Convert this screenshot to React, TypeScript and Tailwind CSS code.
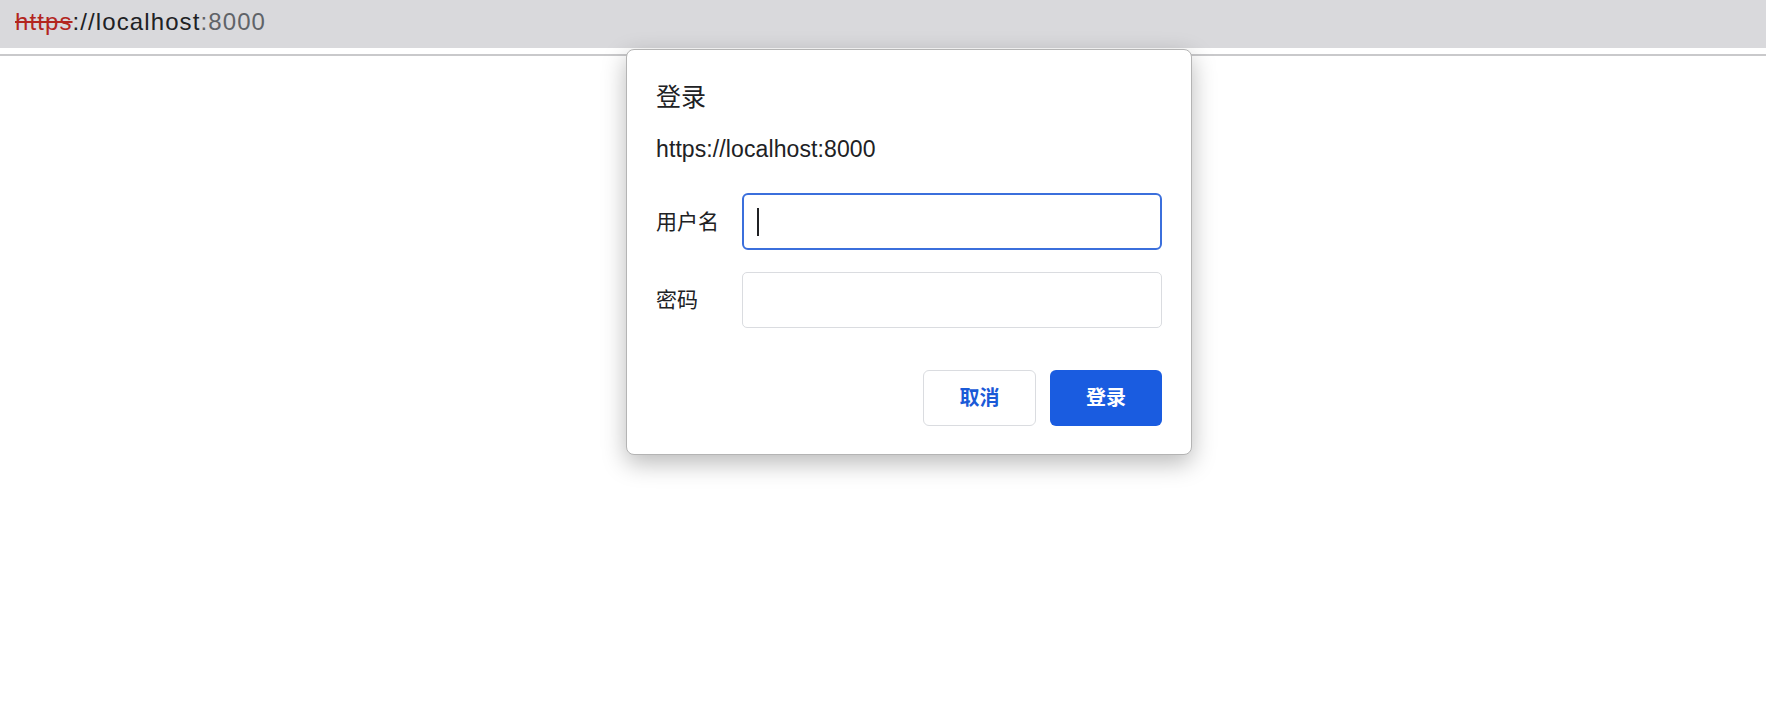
export default function App() {
  return (
    <div className="relative w-[1766px] h-[702px] bg-white overflow-hidden font-['Liberation_Sans','Noto_Sans_CJK_SC',sans-serif] text-[#202124]">
      <div className="h-[48px] bg-[#d9d9dc] pl-[15px] pt-[8px]">
        <div className="text-[24px] leading-[28px] tracking-[1.1px] whitespace-nowrap">
          <span className="text-[#b3261e] line-through decoration-[#b3261e]">https</span>
          <span className="text-[#202124]">://localhost</span>
          <span className="text-[#5f6368]">:8000</span>
        </div>
      </div>
      <div className="h-[6px] bg-white" />
      <div className="h-[2px] bg-[#c9c9cb]" />

      <div className="absolute left-[626px] top-[49px] w-[566px] rounded-[8px] border border-[#b4b4b4] bg-white px-[29px] pt-[31px] pb-[28px] shadow-[0_8px_24px_rgba(0,0,0,0.28)]">
        <div className="h-[32px] text-[25px] leading-[32px]">登录</div>
        <div className="mt-[22px] text-[23px] leading-[28px] tracking-[0.1px]">https://localhost:8000</div>

        <div className="mt-[30px] flex items-center">
          <div className="w-[86px] text-[21px] leading-[28px]">用户名</div>
          <div className="flex h-[57px] flex-1 items-center rounded-[6px] border-2 border-[#3b6fdc] pl-[13px]">
            <div className="h-[28px] w-[2px] bg-[#202124]" />
          </div>
        </div>

        <div className="mt-[22px] flex items-center">
          <div className="w-[86px] text-[21px] leading-[28px]">密码</div>
          <div className="h-[56px] flex-1 rounded-[5px] border border-[#dadce0]" />
        </div>

        <div className="mt-[42px] flex justify-end gap-[14px]">
          <div className="flex h-[56px] w-[113px] items-center justify-center rounded-[6px] border border-[#dadce0] text-[20px] font-bold text-[#1a5ad7]">
            取消
          </div>
          <div className="flex h-[56px] w-[112px] items-center justify-center rounded-[6px] bg-[#1a5ce0] text-[20px] font-bold text-white">
            登录
          </div>
        </div>
      </div>
    </div>
  );
}
